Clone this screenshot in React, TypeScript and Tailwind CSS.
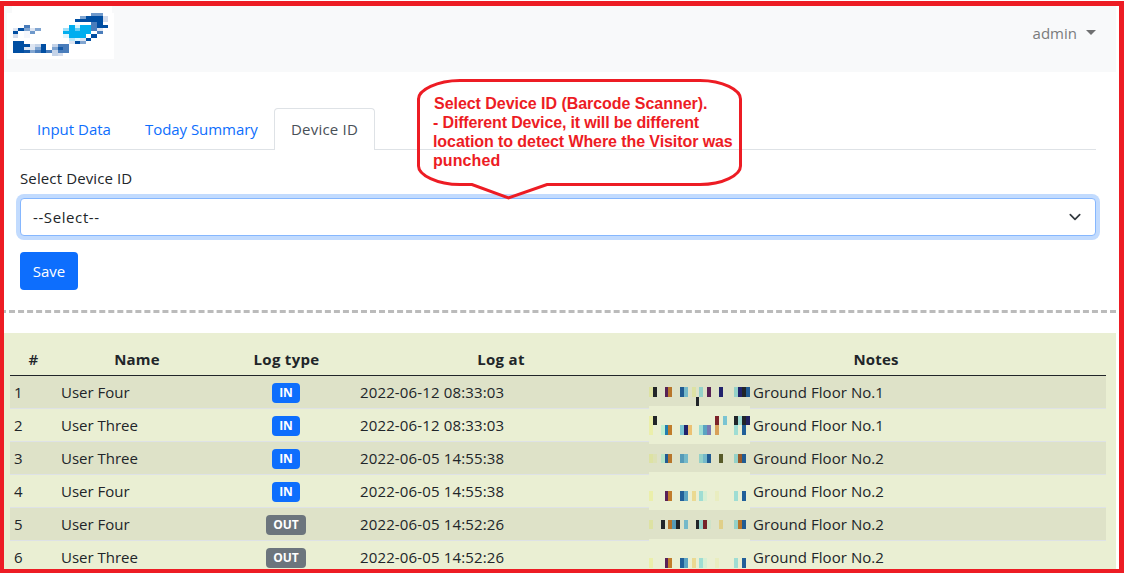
import React from "react";

type Block = [number, number, number, number, string];

const LOGO: Block[] = [
  [36, 18, 300, 24, "#ffffff"],
  [21, 39, 321, 138, "#ffffff"],
  [39, 93, 15, 9, "#004ea2"],
  [54, 84, 18, 9, "#004ea2"],
  [72, 75, 18, 9, "#4a7dbb"],
  [72, 84, 18, 9, "#80a5d1"],
  [39, 84, 15, 9, "#dde5f2"],
  [39, 102, 15, 12, "#d3dcec"],
  [72, 93, 18, 20, "#f5f7fc"],
  [90, 93, 15, 9, "#6f99cb"],
  [105, 84, 18, 9, "#80a5d1"],
  [90, 84, 15, 9, "#dde5f2"],
  [39, 123, 33, 36, "#004ea2"],
  [72, 132, 18, 9, "#004ea2"],
  [72, 141, 18, 9, "#dbe5f2"],
  [72, 150, 18, 9, "#1459a7"],
  [90, 132, 15, 18, "#dde5f2"],
  [90, 150, 15, 9, "#80a5d1"],
  [105, 132, 18, 9, "#c4d3e8"],
  [105, 141, 18, 9, "#80a5d1"],
  [105, 150, 18, 9, "#4a7dbb"],
  [123, 132, 15, 27, "#004ea2"],
  [138, 150, 18, 9, "#4a7dbb"],
  [156, 132, 18, 9, "#c4d3e8"],
  [156, 141, 18, 9, "#80a5d1"],
  [156, 150, 18, 18, "#c4d3e8"],
  [174, 132, 33, 27, "#4a7dbb"],
  [174, 141, 15, 9, "#1459a7"],
  [174, 159, 15, 9, "#d3dcec"],
  [273, 39, 36, 9, "#6f99cb"],
  [240, 48, 18, 9, "#80a5d1"],
  [258, 48, 51, 18, "#004ea2"],
  [225, 57, 48, 9, "#004ea2"],
  [309, 48, 15, 18, "#d3dcec"],
  [273, 66, 18, 27, "#4a7dbb"],
  [291, 66, 18, 18, "#004ea2"],
  [309, 75, 15, 9, "#004ea2"],
  [291, 84, 18, 9, "#dde5f2"],
  [291, 93, 18, 9, "#4a7dbb"],
  [273, 102, 18, 12, "#004ea2"],
  [207, 75, 66, 39, "#00aeef"],
  [225, 75, 15, 9, "#d5f3fd"],
  [225, 84, 15, 9, "#66cef5"],
  [189, 84, 18, 9, "#9fe0f9"],
  [189, 93, 18, 9, "#00aeef"],
  [189, 102, 18, 12, "#dff6fe"],
  [258, 102, 15, 12, "#ffffff"],
  [207, 114, 18, 9, "#b5e7fb"],
  [225, 114, 15, 9, "#dff6fe"],
  [240, 114, 18, 9, "#dde5f2"],
  [258, 114, 15, 9, "#004ea2"],
  [207, 123, 18, 9, "#dde5f2"],
  [225, 123, 15, 9, "#004ea2"],
  [240, 123, 18, 9, "#80a5d1"],
];

const NOTE_1: Block[] = [
  [27, 36, 12, 30, "#dde2a3"],
  [39, 36, 12, 30, "#212529"],
  [75, 36, 9, 30, "#572154"],
  [84, 36, 12, 30, "#b8762b"],
  [120, 36, 12, 30, "#215b92"],
  [132, 36, 12, 30, "#75b9c9"],
  [156, 36, 12, 30, "#dde2a3"],
  [168, 66, 9, 27, "#212529"],
  [177, 36, 12, 30, "#94d1c8"],
  [201, 36, 12, 30, "#572154"],
  [237, 36, 12, 30, "#21226c"],
  [282, 36, 12, 30, "#94d1c8"],
  [294, 36, 12, 30, "#21226c"],
  [306, 36, 12, 30, "#212529"],
  [318, 36, 12, 30, "#215b92"],
];

const NOTE_2: Block[] = [
  [27, 93, 303, 114, "#eaefd3"],
  [39, 123, 12, 27, "#212529"],
  [27, 123, 12, 57, "#ebefab"],
  [63, 150, 12, 30, "#bdf0d2"],
  [75, 150, 9, 30, "#217fb0"],
  [84, 150, 12, 30, "#c17d2b"],
  [120, 150, 12, 30, "#7ac4d2"],
  [132, 150, 12, 30, "#21226c"],
  [144, 150, 12, 30, "#ecc173"],
  [177, 150, 12, 30, "#9fddd3"],
  [189, 150, 12, 30, "#5ba3c2"],
  [201, 150, 12, 30, "#7b79b3"],
  [225, 123, 12, 27, "#7b2229"],
  [225, 150, 12, 30, "#d8a059"],
  [249, 123, 12, 27, "#7ac4d2"],
  [282, 123, 12, 27, "#212529"],
  [294, 123, 12, 27, "#9fddd3"],
  [306, 123, 12, 27, "#212529"],
  [318, 123, 12, 27, "#21225f"],
  [282, 150, 12, 30, "#9fddd3"],
  [306, 150, 12, 30, "#215f99"],
];

const NOTE_3: Block[] = [
  [27, 237, 12, 27, "#dde2a3"],
  [39, 237, 12, 27, "#dde1b5"],
  [63, 237, 12, 27, "#b3e3c7"],
  [75, 237, 9, 27, "#215b92"],
  [84, 237, 12, 27, "#b8762b"],
  [120, 237, 12, 27, "#569bb8"],
  [132, 237, 12, 27, "#75b9c9"],
  [177, 237, 12, 27, "#94d1c8"],
  [189, 237, 12, 27, "#75b9c9"],
  [201, 237, 12, 27, "#215b92"],
  [237, 237, 12, 27, "#575a29"],
  [282, 237, 12, 27, "#94d1c8"],
  [294, 237, 12, 27, "#97592a"],
  [306, 237, 12, 27, "#215b92"],
];

const NOTE_4: Block[] = [
  [27, 291, 303, 114, "#eaefd3"],
  [27, 348, 12, 30, "#ebefab"],
  [75, 348, 9, 30, "#5a2157"],
  [84, 348, 12, 30, "#c17d2b"],
  [120, 348, 12, 30, "#215f99"],
  [132, 348, 12, 30, "#5ba3c2"],
  [156, 348, 12, 30, "#ebda92"],
  [177, 348, 12, 30, "#9fddd3"],
  [189, 348, 12, 30, "#d7efd3"],
  [225, 348, 12, 30, "#e9edc0"],
  [282, 348, 12, 30, "#9fddd3"],
  [306, 348, 12, 30, "#215f99"],
];

const NOTE_5: Block[] = [
  [27, 435, 12, 27, "#dde2a3"],
  [63, 435, 12, 27, "#212529"],
  [84, 435, 12, 27, "#b8762b"],
  [96, 435, 12, 27, "#569bb8"],
  [108, 435, 12, 27, "#212529"],
  [132, 435, 12, 27, "#75b9c9"],
  [168, 435, 9, 27, "#212529"],
  [177, 435, 12, 27, "#94d1c8"],
  [189, 435, 12, 27, "#75222a"],
  [201, 435, 12, 27, "#cfe2c8"],
  [237, 435, 12, 27, "#e0cf89"],
  [282, 435, 12, 27, "#94d1c8"],
  [294, 435, 12, 27, "#b8762b"],
  [306, 435, 12, 27, "#215b92"],
];

const NOTE_6: Block[] = [
  [27, 492, 303, 90, "#eaefd3"],
  ...NOTE_4.slice(1).map(([x, , w, h, c]): Block => [x, 549, w, h, c]),
];

const ROWS = [
  { name: "User Four", type: "IN", at: "2022-06-12 08:33:03", floor: "1", blocks: NOTE_1 },
  { name: "User Three", type: "IN", at: "2022-06-12 08:33:03", floor: "1", blocks: NOTE_2 },
  { name: "User Three", type: "IN", at: "2022-06-05 14:55:38", floor: "2", blocks: NOTE_3 },
  { name: "User Four", type: "IN", at: "2022-06-05 14:55:38", floor: "2", blocks: NOTE_4 },
  { name: "User Four", type: "OUT", at: "2022-06-05 14:52:26", floor: "2", blocks: NOTE_5 },
  { name: "User Three", type: "OUT", at: "2022-06-05 14:52:26", floor: "2", blocks: NOTE_6 },
];

const GRID = "grid grid-cols-[47px_160px_139px_290px_460px]";

function Blocks({ blocks }: { blocks: Block[] }) {
  return (
    <>
      {blocks.map(([x, y, w, h, c], i) => (
        <rect key={i} x={x} y={y} width={w} height={h} fill={c} />
      ))}
    </>
  );
}

function Navbar() {
  return (
    <header className="flex h-[72px] items-start justify-between bg-[#f8f9fa] pr-5">
      <svg className="h-[72px] w-[130px]" viewBox="0 0 390 216" shapeRendering="crispEdges">
        <Blocks blocks={LOGO} />
      </svg>
      <button className="mt-[21px] flex items-center text-[#7a7b7c]">
        <span className="leading-6">admin</span>
        <svg className="mb-0.5 ml-[9px] h-[5px] w-[10px]" viewBox="0 0 10 5" fill="#6f7071">
          <path d="M0 0h10L5 5z" />
        </svg>
      </button>
    </header>
  );
}

function Tabs() {
  return (
    <nav className="flex h-[42px] border-b border-[#dee2e6] leading-[43px] text-[#0d6efd]">
      <a className="w-[108px] pl-[17px]">Input Data</a>
      <a className="w-[146px] pl-[17px] tracking-[-0.05px]">Today Summary</a>
      <a className="-mb-px h-[42px] w-[101px] rounded-t border border-b-0 border-[#dee2e6] bg-white pl-4 leading-[41px] tracking-[0.2px] text-[#495057]">
        Device ID
      </a>
    </nav>
  );
}

function Callout() {
  return (
    <aside className="absolute left-[415px] top-[77px] h-[124px] w-[330px]">
      <svg className="absolute inset-0" width="330" height="124" viewBox="0 0 330 124">
        <path
          d="M45 3.5H285C308 3.5 325.5 13 325.5 22V89C325.5 98 308 107.5 285 107.5H132L93.5 121L57 107.5H45C22 107.5 3.5 98 3.5 89V22C3.5 13 22 3.5 45 3.5Z"
          fill="none"
          stroke="#ed1c24"
          strokeWidth="3"
        />
      </svg>
      <p className="relative whitespace-nowrap pl-[18px] pt-[17px] font-['Liberation_Sans',sans-serif] text-[16px] font-bold leading-[19px] tracking-[-0.08px] text-[#ed1c24]">
        <span className="ml-px tracking-[-0.04px]">Select Device ID (Barcode Scanner).</span>
        <br />
        <span className="tracking-[-0.15px]">- Different Device, it will be different</span>
        <br />
        location to detect Where the Visitor was
        <br />
        <span className="tracking-[0.1px]">punched</span>
      </p>
    </aside>
  );
}

function LogTable() {
  return (
    <section className="mt-5 h-[250px] bg-[#eaefd3] px-[10px] pt-[10px]">
      <div className={`${GRID} h-[33px] border-b border-[#212529] text-center font-bold leading-8 tracking-[0.15px]`}>
        <span className="font-semibold">#</span>
        <span>Name</span>
        <span className="tracking-[0.3px]">Log type</span>
        <span className="tracking-[0.3px]">Log at</span>
        <span>Notes</span>
      </div>
      {ROWS.map((row, i) => (
        <div
          key={i}
          className={`${GRID} h-[33px] border-b border-[#dee2e6] leading-8 ${i % 2 === 0 ? "bg-[#dee2c8]" : ""}`}
        >
          <span className="pl-1">{i + 1}</span>
          <span className="pl-1 tracking-normal">{row.name}</span>
          <span className="flex items-center justify-center pr-px">
            <b
              className={`flex h-5 items-center justify-center rounded text-[12px] leading-none tracking-normal text-white ${
                row.type === "IN" ? "w-7 bg-[#0d6efd]" : "w-10 bg-[#6c757d]"
              }`}
            >
              {row.type}
            </b>
          </span>
          <span className="pl-1 tracking-[0.14px]">{row.at}</span>
          <span className="flex pl-[3px] tracking-[0.06px]">
            <svg
              className="mr-[3px] h-[33px] w-[101px] overflow-visible"
              viewBox={`27 ${3 + i * 99} 303 99`}
              shapeRendering="crispEdges"
            >
              <Blocks blocks={row.blocks} />
            </svg>
            Ground Floor No.{row.floor}
          </span>
        </div>
      ))}
    </section>
  );
}

export default function App() {
  return (
    <div className="relative h-[573px] w-[1125px] overflow-hidden bg-white font-['Open_Sans','Noto_Sans',sans-serif] text-[15px] text-[#212529]">
      <div className="w-[1116px]">
        <Navbar />
        <main className="h-[238px] px-5 pt-9">
          <Tabs />
          <label className="mt-4 block h-8 leading-6 tracking-[0.12px]">Select Device ID</label>
          <div className="flex h-[38px] items-center justify-between rounded border border-[#86b7fe] bg-white pl-3 pr-3 shadow-[0_0_0_4px_#c2dbfe]">
            <span className="tracking-[0.6px]">--Select--</span>
            <svg width="16" height="12" viewBox="0 0 16 12" fill="none">
              <path
                d="M3.3 3.7 8 8.3 12.7 3.7"
                stroke="#343a40"
                strokeWidth="1.7"
                strokeLinecap="round"
                strokeLinejoin="round"
              />
            </svg>
          </div>
          <button className="mt-4 block h-[38px] w-[58px] rounded bg-[#0d6efd] text-white">Save</button>
        </main>
        <div className="border-t-[3px] border-dashed border-[#bbbbbb]" />
        <LogTable />
      </div>
      <Callout />
      <div className="pointer-events-none absolute left-0 top-px h-[572px] w-[1124px] border-4 border-r-[5px] border-t-[5px] border-[#ed1c24]" />
      <div className="absolute left-0 top-0 h-px w-full bg-white" />
    </div>
  );
}
